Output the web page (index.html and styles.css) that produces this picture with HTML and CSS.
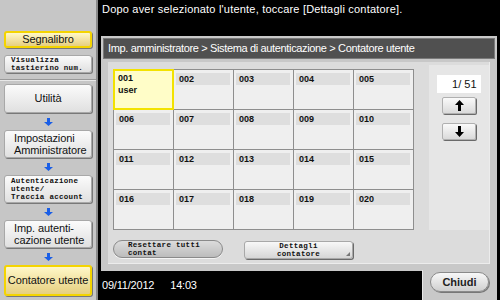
FILE: index.html
```html
<!DOCTYPE html>
<html lang="it">
<head>
    <meta charset="UTF-8">
    <title>Contatore utente</title>
    <link rel="stylesheet" href="styles.css">
</head>
<body>
    <div class="screen">
        <aside class="sidebar">
            <div class="side-btn yellow bookmark">Segnalibro</div>
            <div class="side-btn tiny keypad">Visualizza<br>tastierino num.</div>
            <div class="side-sep"></div>
            <div class="side-btn step">Utilità</div>
            <div class="step-arrow"><svg width="9" height="8" viewBox="0 0 9 8"><path d="M3 0h3v4h3L4.5 8 0 4h3z"/></svg></div>
            <div class="side-btn step two">Impostazioni<br>Amministratore</div>
            <div class="step-arrow"><svg width="9" height="8" viewBox="0 0 9 8"><path d="M3 0h3v4h3L4.5 8 0 4h3z"/></svg></div>
            <div class="side-btn step tiny three">Autenticazione<br>utente/<br>Traccia account</div>
            <div class="step-arrow"><svg width="9" height="8" viewBox="0 0 9 8"><path d="M3 0h3v4h3L4.5 8 0 4h3z"/></svg></div>
            <div class="side-btn step two">Imp. autenti-<br>cazione utente</div>
            <div class="step-arrow"><svg width="9" height="8" viewBox="0 0 9 8"><path d="M3 0h3v4h3L4.5 8 0 4h3z"/></svg></div>
            <div class="side-btn step yellow">Contatore utente</div>
        </aside>

        <main class="main">
            <div class="message">Dopo aver selezionato l'utente, toccare [Dettagli contatore].</div>

            <section class="panel">
                <div class="crumbs">Imp. amministratore &gt; Sistema di autenticazione &gt; Contatore utente</div>
                <div class="content">
                    <div class="top-row">
                        <div class="grid">
                            <div class="cell selected"><span>001</span><span>user</span></div>
                            <div class="cell"><span class="num">002</span></div>
                            <div class="cell"><span class="num">003</span></div>
                            <div class="cell"><span class="num">004</span></div>
                            <div class="cell"><span class="num">005</span></div>
                            <div class="cell"><span class="num">006</span></div>
                            <div class="cell"><span class="num">007</span></div>
                            <div class="cell"><span class="num">008</span></div>
                            <div class="cell"><span class="num">009</span></div>
                            <div class="cell"><span class="num">010</span></div>
                            <div class="cell"><span class="num">011</span></div>
                            <div class="cell"><span class="num">012</span></div>
                            <div class="cell"><span class="num">013</span></div>
                            <div class="cell"><span class="num">014</span></div>
                            <div class="cell"><span class="num">015</span></div>
                            <div class="cell"><span class="num">016</span></div>
                            <div class="cell"><span class="num">017</span></div>
                            <div class="cell"><span class="num">018</span></div>
                            <div class="cell"><span class="num">019</span></div>
                            <div class="cell"><span class="num">020</span></div>
                        </div>
                        <div class="pager">
                            <div class="page-count">1/ 51</div>
                            <div class="page-btn"><svg width="9" height="11" viewBox="0 0 9 11"><path d="M4.5 0L9 5H6v6H3V5H0z"/></svg></div>
                            <div class="page-btn"><svg width="9" height="11" viewBox="0 0 9 11"><path d="M4.5 11L9 6H6V0H3v6H0z"/></svg></div>
                        </div>
                    </div>
                    <div class="actions">
                        <div class="pill-btn tiny">Resettare tutti<br>contat</div>
                        <div class="detail-btn tiny">Dettagli<br>contatore</div>
                    </div>
                </div>
            </section>

            <div class="footer">
                <div class="clock"><span>09/11/2012</span><span>14:03</span></div>
                <div class="close-tab"><div class="close-btn">Chiudi</div></div>
            </div>
        </main>
    </div>
</body>
</html>
```

FILE: styles.css
```css
body {
    margin: 0;
    padding: 0;
    font-family: "Liberation Sans", Arial, sans-serif;
    font-size: 11px;
    color: #111;
}

.screen {
    display: flex;
    width: 500px;
    height: 300px;
    overflow: hidden;
}

/* left column */
.sidebar {
    width: 98px;
    border-right: 2px solid #8a8a8a;
    background-color: #c6c6c6;
    display: flex;
    flex-direction: column;
    align-items: center;
    padding-top: 31px;
    box-sizing: border-box;
}

.side-btn {
    width: 88px;
    box-sizing: border-box;
    background: linear-gradient(#fbfbfb, #e0e0e0);
    border: 1px solid #a8a8a8;
    border-radius: 3px;
    box-shadow: 1px 1px 0 #787878;
    display: flex;
    align-items: center;
    justify-content: center;
    text-align: center;
    letter-spacing: -0.1px;
    line-height: 11px;
}

.side-btn.yellow {
    background: linear-gradient(#fff8c8, #e6cf80);
    border: 2px solid #f4d400;
}

.bookmark {
    height: 17px;
}

.keypad {
    height: 18px;
    margin-top: 7px;
}

.tiny {
    font-family: "Liberation Mono", monospace;
    font-weight: bold;
    font-size: 7.5px;
    line-height: 8px;
    letter-spacing: 0.3px;
    justify-content: flex-start;
    text-align: left;
    padding-left: 6px;
}

.side-sep {
    width: 100%;
    height: 1px;
    margin-top: 6px;
    background-color: #999;
    border-bottom: 1px solid #e8e8e8;
}

.side-btn.step {
    height: 29px;
}

.side-sep + .step {
    margin-top: 3px;
}

.side-btn.two {
    height: 28px;
    justify-content: flex-start;
    text-align: left;
    padding-left: 9px;
    line-height: 12px;
}

.side-btn.three {
    height: 28px;
    padding-left: 6px;
}

.side-btn.step.yellow {
    height: 31px;
}

.step-arrow {
    height: 17px;
    display: flex;
    align-items: center;
    justify-content: center;
}

.step-arrow svg {
    fill: #1a5ee6;
}

/* right side */
.main {
    flex: 1;
    background-color: #000;
    display: flex;
    flex-direction: column;
}

.message {
    height: 36px;
    box-sizing: border-box;
    padding: 3px 0 0 4px;
    color: #fff;
    letter-spacing: 0.2px;
}

.panel {
    margin: 0 3px;
    background-color: #c8c8c8;
    padding: 2px 2px 7px;
    display: flex;
    flex-direction: column;
}

.crumbs {
    height: 21px;
    background-color: #505050;
    border: 1px solid #7a7a7a;
    box-sizing: border-box;
    color: #fff;
    padding-left: 4px;
    line-height: 19px;
    letter-spacing: -0.35px;
    white-space: nowrap;
    overflow: hidden;
}

.content {
    margin: 3px 5px 0;
    height: 202px;
    background-color: #dcdcdc;
    border-right: 1px solid #ececec;
    border-bottom: 1px solid #ececec;
    box-sizing: border-box;
    padding: 3px 0 0 5px;
}

.top-row {
    display: flex;
    align-items: flex-start;
    justify-content: space-between;
}

.grid {
    margin-top: 4px;
    display: grid;
    grid-template-columns: repeat(5, 59px);
    grid-template-rows: repeat(4, 39px);
    gap: 1px;
    padding: 1px;
    background-color: #8e8e8e;
}

.cell {
    background-color: #efefef;
    padding: 3px 3px 0 2px;
    display: flex;
    flex-direction: column;
    font-weight: bold;
    font-size: 9px;
}

.cell .num {
    background-color: #dedede;
    height: 12px;
    line-height: 12px;
    padding-left: 3px;
}

.cell.selected {
    background-color: #fffdc8;
    border: 2px solid #f3e200;
    padding: 1px 0 0 3px;
    margin: -1px;
    line-height: 12px;
}

.pager {
    width: 60px;
    height: 165px;
    background-color: #e6e6e6;
    display: flex;
    flex-direction: column;
    align-items: center;
    padding-top: 10px;
    box-sizing: border-box;
}

.page-count {
    width: 44px;
    height: 18px;
    background-color: #fff;
    text-align: right;
    line-height: 18px;
    padding-right: 4px;
    box-sizing: border-box;
    margin-left: -1px;
}

.page-btn {
    width: 34px;
    height: 17px;
    margin-top: 4px;
    margin-bottom: 4px;
    box-sizing: border-box;
    background: linear-gradient(#fafafa, #dadada);
    border: 1px solid #b0b0b0;
    border-radius: 2px;
    box-shadow: 1px 1px 0 #6a6a6a;
    display: flex;
    align-items: center;
    justify-content: center;
}

.page-btn + .page-btn {
    margin-top: 5px;
}

.actions {
    display: flex;
    margin-top: 10px;
    gap: 21px;
}

.pill-btn {
    width: 110px;
    height: 18px;
    box-sizing: border-box;
    background: linear-gradient(#dcdcdc, #bcbcbc);
    border: 1px solid #8a8a8a;
    border-radius: 9px;
    box-shadow: 0 1px 0 #f4f4f4;
    display: flex;
    align-items: center;
    padding-left: 14px;
}

.detail-btn {
    position: relative;
    width: 109px;
    height: 18px;
    box-sizing: border-box;
    background: linear-gradient(#f8f8f8, #d6d6d6);
    border: 1px solid #a8a8a8;
    border-radius: 3px;
    box-shadow: 1px 1px 0 #6a6a6a;
    display: flex;
    align-items: center;
    justify-content: center;
    text-align: center;
    padding-left: 0;
    margin-top: 1px;
}

.detail-btn::after {
    content: "";
    position: absolute;
    right: 2px;
    bottom: 2px;
    border-left: 4px solid transparent;
    border-bottom: 4px solid #777;
}

.footer {
    flex: 1;
    display: flex;
    justify-content: space-between;
    margin-right: 3px;
}

.clock {
    color: #fff;
    padding: 8px 0 0 4px;
    display: flex;
    gap: 16px;
    letter-spacing: -0.2px;
}

.close-tab {
    width: 75px;
    background-color: #c8c8c8;
    border-left: 1px solid #e6e6e6;
    box-sizing: border-box;
    padding: 2px 0 0 7px;
    margin-top: -1px;
}

.close-btn {
    width: 59px;
    height: 20px;
    box-sizing: border-box;
    background: linear-gradient(#f8f8f8, #cfcfcf);
    border: 1px solid #8a8a8a;
    border-radius: 10px;
    box-shadow: 1px 1px 0 #777;
    text-align: center;
    line-height: 18px;
    font-weight: bold;
    color: #222;
}
```
